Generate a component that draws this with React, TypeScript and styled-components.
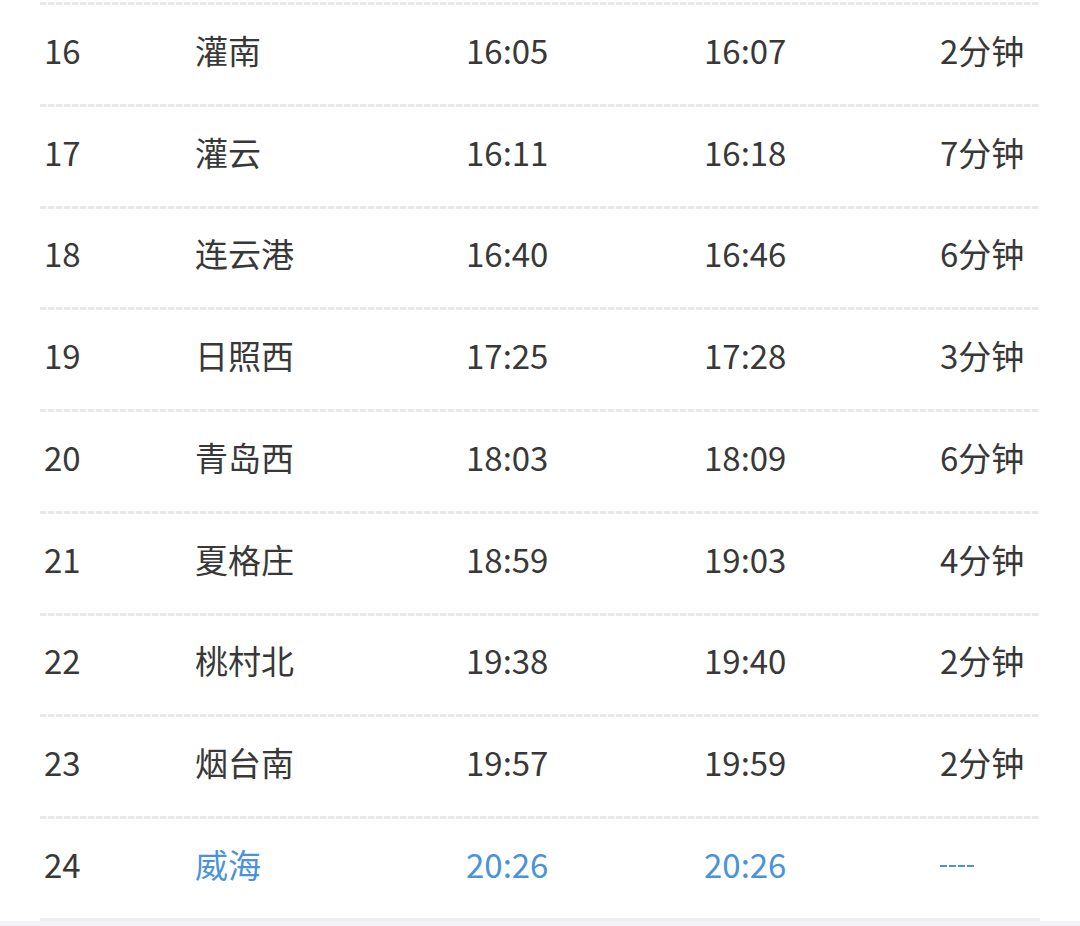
import { styled, createGlobalStyle } from "styled-components";

const GlobalStyle = createGlobalStyle`
  html, body {
    margin: 0;
    padding: 0;
    background: #ffffff;
  }
  body {
    font-family: "Noto Sans CJK SC", "Noto Sans", sans-serif;
  }
`;

const Page = styled.div`
  width: 1080px;
  height: 926px;
  overflow: hidden;
  background: linear-gradient(#ffffff 0, #ffffff 921px, #f3f3f5 921px);
`;

const Table = styled.div`
  margin: 0 40px;
  padding-top: 2px;
`;

const Divider = styled.div<{ $solid?: boolean }>`
  height: 3px;
  background: ${(p) =>
    p.$solid
      ? "#eeeef0"
      : "repeating-linear-gradient(90deg, #e9e9e9 0, #e9e9e9 6px, #f6f6f6 6px, #f6f6f6 8px)"};
`;

const Row = styled.div`
  display: grid;
  grid-template-columns: 151px 271px 238px 236px 1fr;
  align-items: center;
  box-sizing: border-box;
  height: 98.75px;
  padding: 0 0 8px 4px;
`;

const Cell = styled.span<{ $active?: boolean }>`
  font-size: 33px;
  font-weight: 400;
  line-height: 1;
  color: ${(p) => (p.$active ? "#4a93db" : "#383838")};
  white-space: nowrap;
`;

const Dash = styled.span`
  display: block;
  width: 36px;
  height: 2px;
  margin-top: 4px;
  background: repeating-linear-gradient(90deg, #4a93db 0, #4a93db 7px, transparent 7px, transparent 9px);
`;

interface IStop {
  no: number;
  name: string;
  arrive: string;
  depart: string;
  stay: string;
}

const stops: IStop[] = [
  { no: 16, name: "灌南", arrive: "16:05", depart: "16:07", stay: "2分钟" },
  { no: 17, name: "灌云", arrive: "16:11", depart: "16:18", stay: "7分钟" },
  { no: 18, name: "连云港", arrive: "16:40", depart: "16:46", stay: "6分钟" },
  { no: 19, name: "日照西", arrive: "17:25", depart: "17:28", stay: "3分钟" },
  { no: 20, name: "青岛西", arrive: "18:03", depart: "18:09", stay: "6分钟" },
  { no: 21, name: "夏格庄", arrive: "18:59", depart: "19:03", stay: "4分钟" },
  { no: 22, name: "桃村北", arrive: "19:38", depart: "19:40", stay: "2分钟" },
  { no: 23, name: "烟台南", arrive: "19:57", depart: "19:59", stay: "2分钟" },
  { no: 24, name: "威海", arrive: "20:26", depart: "20:26", stay: "" },
];

function App() {
  return (
    <Page>
      <GlobalStyle />
      <Table>
        <Divider />
        {stops.map((s, i) => {
          const last = i === stops.length - 1;
          return (
            <div key={s.no}>
              <Row>
                <Cell>{s.no}</Cell>
                <Cell $active={last}>{s.name}</Cell>
                <Cell $active={last}>{s.arrive}</Cell>
                <Cell $active={last}>{s.depart}</Cell>
                {last ? <Dash title="----" /> : <Cell>{s.stay}</Cell>}
              </Row>
              <Divider $solid={last} />
            </div>
          );
        })}
      </Table>
    </Page>
  );
}

export default App;
